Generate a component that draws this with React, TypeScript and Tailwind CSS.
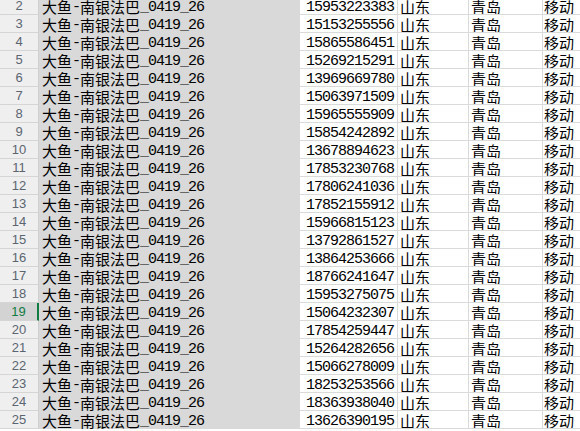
const rows = [
  [2, '15953223383'],
  [3, '15153255556'],
  [4, '15865586451'],
  [5, '15269215291'],
  [6, '13969669780'],
  [7, '15063971509'],
  [8, '15965555909'],
  [9, '15854242892'],
  [10, '13678894623'],
  [11, '17853230768'],
  [12, '17806241036'],
  [13, '17852155912'],
  [14, '15966815123'],
  [15, '13792861527'],
  [16, '13864253666'],
  [17, '18766241647'],
  [18, '15953275075'],
  [19, '15064232307'],
  [20, '17854259447'],
  [21, '15264282656'],
  [22, '15066278009'],
  [23, '18253253566'],
  [24, '18363938040'],
  [25, '13626390195'],
] as const;

const NAME = '大鱼-南银法巴_0419_26';

// cjk runs keep their width, latin runs are squeezed to an 8px advance
const Mixed = ({ text }: { text: string }) => (
  <>
    {text.split(/([\u4e00-\u9fff]+)/).filter(Boolean).map((part, i) =>
      /[\u4e00-\u9fff]/.test(part) ? (
        <span
          key={i}
          className="inline-block h-[17px] align-top font-['Noto_Sans_CJK_SC',sans-serif] leading-[17px] translate-y-[1px]"
        >
          {part}
        </span>
      ) : (
        <span
          key={i}
          className="inline-block h-[17px] align-top font-['Liberation_Mono',monospace] leading-[17px] tracking-[-1px] translate-y-[2px]"
        >
          {part}
        </span>
      )
    )}
  </>
);

const cell = 'h-[18px] border-b border-[#dadada] text-[15px] leading-[17px] text-black whitespace-nowrap overflow-hidden';

const Row = ({ num, phone }: { num: number; phone: string }) => {
  const active = num === 19;
  return (
    <div className="flex">
      <div
        className={`h-[18px] w-[39px] shrink-0 border-b border-[#d5d5d5] text-center font-['Liberation_Sans',sans-serif] text-[13px] leading-[17px] ${
          active ? 'bg-[#d3d3d3] text-[#107c41] border-r-2 border-r-[#107c41]' : 'bg-[#efefef] text-[#5b6570] border-r border-r-[#cfcfcf]'
        }`}
      >
        {num}
      </div>
      <div className="h-[18px] w-[261px] shrink-0 bg-[#d9d9d9] pl-[3px] text-[15px] leading-[17px] text-black whitespace-nowrap overflow-hidden">
        <Mixed text={NAME} />
      </div>
      <div className={`${cell} w-[98px] shrink-0 border-r pl-[6px]`}>
        <Mixed text={phone} />
      </div>
      <div className={`${cell} w-[71px] shrink-0 border-r pl-[2px]`}>
        <Mixed text="山东" />
      </div>
      <div className={`${cell} w-[74px] shrink-0 border-r pl-[2px]`}>
        <Mixed text="青岛" />
      </div>
      <div className={`${cell} flex-1 pl-[1px]`}>
        <Mixed text="移动" />
      </div>
    </div>
  );
};

export default function App() {
  return (
    <div className="h-[431px] w-[580px] overflow-hidden bg-white">
      <div className="-mt-[3px] flex flex-col">
        {rows.map(([n, p]) => (
          <Row key={n} num={n} phone={p} />
        ))}
      </div>
    </div>
  );
}
